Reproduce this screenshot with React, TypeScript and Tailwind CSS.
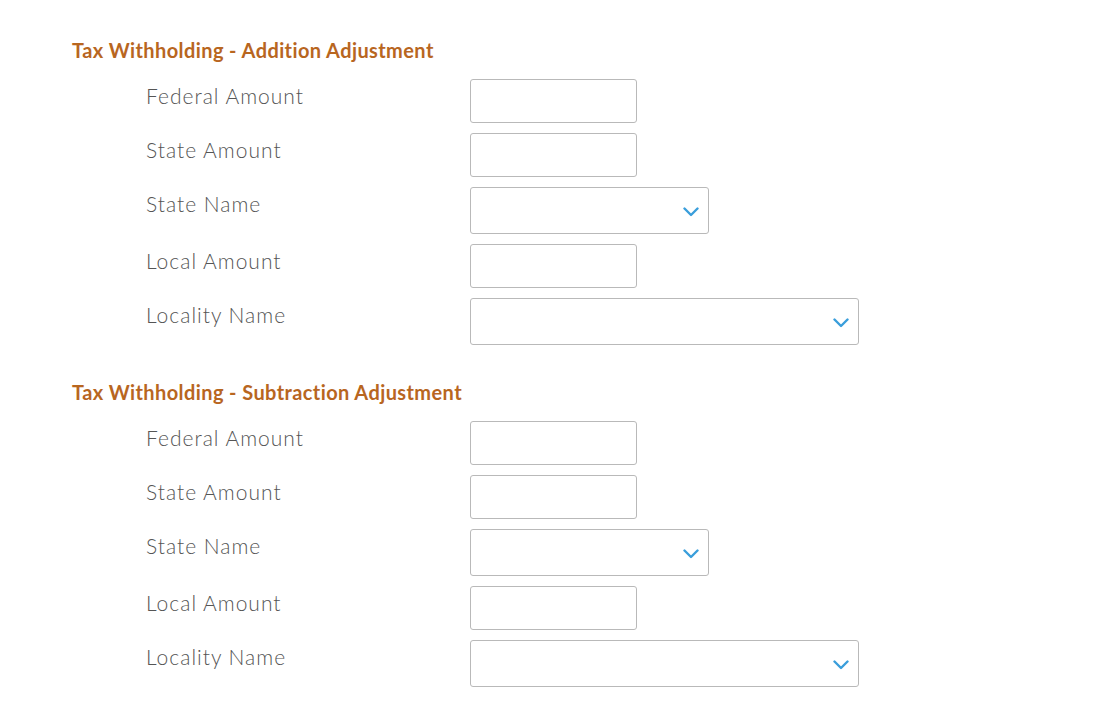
import React from "react";

type Field = { label: string; kind: "input" | "select"; width: string };

const fields: Field[] = [
  { label: "Federal Amount", kind: "input", width: "w-[167px]" },
  { label: "State Amount", kind: "input", width: "w-[167px]" },
  { label: "State Name", kind: "select", width: "w-[239px]" },
  { label: "Local Amount", kind: "input", width: "w-[167px]" },
  { label: "Locality Name", kind: "select", width: "w-[389px]" },
];

function Chevron() {
  return (
    <svg width="16" height="10" viewBox="0 0 16 10" fill="none">
      <path d="M1.5 1.5 L8 8 L14.5 1.5" stroke="#3a9edb" strokeWidth="2.4" strokeLinecap="round" strokeLinejoin="round" />
    </svg>
  );
}

function Section({ title }: { title: string }) {
  return (
    <section>
      <h2 className="text-[20px] font-bold text-[#b8661f] leading-[24px] tracking-[0.4px]">{title}</h2>
      <div className="mt-[17px] flex flex-col gap-[10px]">
        {fields.map((f) => (
          <div key={f.label} className="flex items-start">
            <label className="w-[398px] pl-[74px] pt-[3px] text-[21px] font-light text-[#555] leading-[28px] tracking-[1px] font-['Lato_Light','Lato',sans-serif]">
              {f.label}
            </label>
            {f.kind === "input" ? (
              <input
                type="text"
                className={`${f.width} h-[44px] rounded-[3px] border border-[#b9b9b9] bg-white`}
              />
            ) : (
              <div
                className={`${f.width} h-[47px] rounded-[3px] border border-[#b9b9b9] bg-white flex items-center justify-end pr-[9px] pt-[3px]`}
              >
                <Chevron />
              </div>
            )}
          </div>
        ))}
      </div>
    </section>
  );
}

export default function App() {
  return (
    <div className="min-h-screen bg-white pl-[72px] pt-[38px] font-['Lato',sans-serif]">
      <div className="flex flex-col gap-[35px]">
        <Section title="Tax Withholding - Addition Adjustment" />
        <Section title="Tax Withholding - Subtraction Adjustment" />
      </div>
    </div>
  );
}
